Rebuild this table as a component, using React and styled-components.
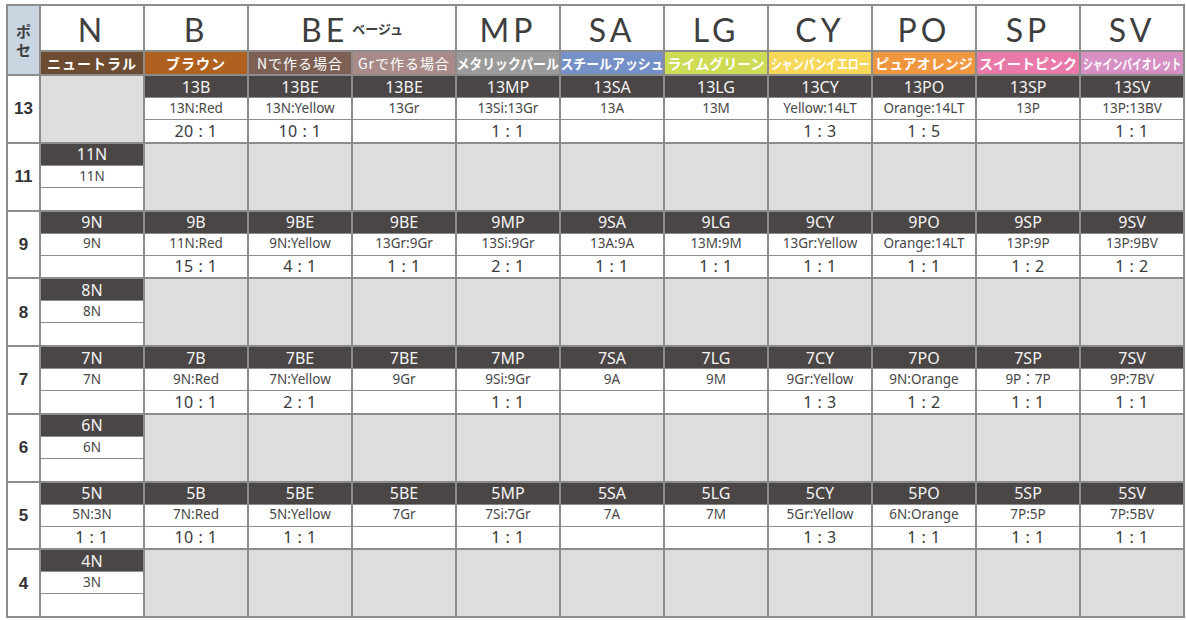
import React, { Fragment } from 'react';
import styled, { createGlobalStyle } from 'styled-components';

const GlobalStyle = createGlobalStyle`
  html, body {
    margin: 0;
    padding: 0;
    background: #ffffff;
  }
  body {
    font-family: "Noto Sans", "Noto Sans CJK JP", sans-serif;
  }
`;

const Page = styled.div`
  padding: 4px 0 0 6px;
`;

const Table = styled.table`
  width: 1178px;
  border-collapse: collapse;
  table-layout: fixed;
  border: 2px solid #8c8c8c;
  color: #3a3a3a;

  td, th {
    border: 2px solid #8c8c8c;
    padding: 0;
    text-align: center;
    vertical-align: middle;
    white-space: nowrap;
    overflow: hidden;
    line-height: 1;
  }
`;

const Corner = styled.th`
  background: #c9d5e1;
  color: #3f3f3f;
  font-family: "Noto Sans CJK JP", sans-serif;
  font-size: 15px;
  font-weight: 700;
  line-height: 19px !important;
`;

const Big = styled.th`
  height: 40px;
  font-family: Lato, sans-serif;
  font-size: 32px;
  font-weight: 400;
  letter-spacing: 4px;
  color: #3e3e3e;
  padding-top: 4px !important;
`;

const BigSub = styled.span`
  font-family: "Noto Sans CJK JP", sans-serif;
  font-size: 13px;
  font-weight: 700;
  letter-spacing: 0;
  margin-left: 4px;
  vertical-align: 8px;
`;

const Sub = styled.th`
  height: 22px;
  background: ${(p) => p.$bg};
  color: #ffffff;
  font-family: "Noto Sans CJK JP", sans-serif;
  font-size: 14px;
  font-weight: ${(p) => (p.$light ? 400 : 700)};
  letter-spacing: ${(p) => p.$ls || 0}px;
  border-bottom-width: 1px !important;
`;

const SubText = styled.span`
  display: inline-block;
  transform: scaleX(${(p) => p.$sx || 1});
  transform-origin: center;
  margin: 0 -20px;
`;

const RowLabel = styled.td`
  font-family: "Liberation Sans", sans-serif;
  font-size: 17px;
  font-weight: 700;
  color: #333333;
`;

const Empty = styled.td`
  background: #dedede;
`;

const Code = styled.td`
  height: 21px;
  background: #4a4645;
  color: #f4f4f4;
  font-size: 16px;
  border-bottom-width: 1px !important;
`;

const Mix = styled.td`
  height: 21px;
  font-size: 13.5px;
  color: #474747;
  border-top-width: 1px !important;
  border-bottom-width: 1px !important;
`;

const Ratio = styled.td`
  height: 21.75px;
  font-size: 16px;
  letter-spacing: 0.5px;
  color: #3a3a3a;
  border-top-width: 1px !important;
`;

const subs = [
  { t: 'ニュートラル', bg: '#6d4c31', ls: 1 },
  { t: 'ブラウン', bg: '#b0611f', ls: 1 },
  { t: 'Nで作る場合', bg: '#7d5f54', light: true, ls: 1 },
  { t: 'Grで作る場合', bg: '#a88a88', light: true, ls: 1 },
  { t: 'メタリックパール', bg: '#9b9b9b', sx: 0.92 },
  { t: 'スチールアッシュ', bg: '#7690c8', sx: 0.92 },
  { t: 'ライムグリーン', bg: '#cedc55', sx: 1 },
  { t: 'シャンパンイエロー', bg: '#f6d757', sx: 0.78 },
  { t: 'ピュアオレンジ', bg: '#f0963e', sx: 1 },
  { t: 'スイートピンク', bg: '#e979a8', sx: 1 },
  { t: 'シャインバイオレット', bg: '#d690c4', sx: 0.7 },
];

const rows = [
  {
    label: '13',
    cells: [
      null,
      ['13B', '13N:Red', '20 : 1'],
      ['13BE', '13N:Yellow', '10 : 1'],
      ['13BE', '13Gr', ''],
      ['13MP', '13Si:13Gr', '1 : 1'],
      ['13SA', '13A', ''],
      ['13LG', '13M', ''],
      ['13CY', 'Yellow:14LT', '1 : 3'],
      ['13PO', 'Orange:14LT', '1 : 5'],
      ['13SP', '13P', ''],
      ['13SV', '13P:13BV', '1 : 1'],
    ],
  },
  { label: '11', cells: [['11N', '11N', ''], null, null, null, null, null, null, null, null, null, null] },
  {
    label: '9',
    cells: [
      ['9N', '9N', ''],
      ['9B', '11N:Red', '15 : 1'],
      ['9BE', '9N:Yellow', '4 : 1'],
      ['9BE', '13Gr:9Gr', '1 : 1'],
      ['9MP', '13Si:9Gr', '2 : 1'],
      ['9SA', '13A:9A', '1 : 1'],
      ['9LG', '13M:9M', '1 : 1'],
      ['9CY', '13Gr:Yellow', '1 : 1'],
      ['9PO', 'Orange:14LT', '1 : 1'],
      ['9SP', '13P:9P', '1 : 2'],
      ['9SV', '13P:9BV', '1 : 2'],
    ],
  },
  { label: '8', cells: [['8N', '8N', ''], null, null, null, null, null, null, null, null, null, null] },
  {
    label: '7',
    cells: [
      ['7N', '7N', ''],
      ['7B', '9N:Red', '10 : 1'],
      ['7BE', '7N:Yellow', '2 : 1'],
      ['7BE', '9Gr', ''],
      ['7MP', '9Si:9Gr', '1 : 1'],
      ['7SA', '9A', ''],
      ['7LG', '9M', ''],
      ['7CY', '9Gr:Yellow', '1 : 3'],
      ['7PO', '9N:Orange', '1 : 2'],
      ['7SP', '9P：7P', '1 : 1'],
      ['7SV', '9P:7BV', '1 : 1'],
    ],
  },
  { label: '6', cells: [['6N', '6N', ''], null, null, null, null, null, null, null, null, null, null] },
  {
    label: '5',
    cells: [
      ['5N', '5N:3N', '1 : 1'],
      ['5B', '7N:Red', '10 : 1'],
      ['5BE', '5N:Yellow', '1 : 1'],
      ['5BE', '7Gr', ''],
      ['5MP', '7Si:7Gr', '1 : 1'],
      ['5SA', '7A', ''],
      ['5LG', '7M', ''],
      ['5CY', '5Gr:Yellow', '1 : 3'],
      ['5PO', '6N:Orange', '1 : 1'],
      ['5SP', '7P:5P', '1 : 1'],
      ['5SV', '7P:5BV', '1 : 1'],
    ],
  },
  { label: '4', cells: [['4N', '3N', ''], null, null, null, null, null, null, null, null, null, null] },
];

const App = () => {
  return (
    <Page>
      <GlobalStyle />
      <Table>
        <colgroup>
          <col style={{ width: 33 }} />
          {subs.map((s, i) => (
            <col key={i} style={{ width: 104 }} />
          ))}
        </colgroup>
        <thead>
          <tr>
            <Corner rowSpan={2}>ポ<br />セ</Corner>
            <Big>N</Big>
            <Big>B</Big>
            <Big colSpan={2}>BE<BigSub>ベージュ</BigSub></Big>
            <Big>MP</Big>
            <Big>SA</Big>
            <Big>LG</Big>
            <Big>CY</Big>
            <Big>PO</Big>
            <Big>SP</Big>
            <Big>SV</Big>
          </tr>
          <tr>
            {subs.map((s) => (
              <Sub key={s.t} $bg={s.bg} $light={s.light} $ls={s.ls}>
                <SubText $sx={s.sx}>{s.t}</SubText>
              </Sub>
            ))}
          </tr>
        </thead>
        <tbody>
          {rows.map((r) => (
            <Fragment key={r.label}>
              <tr>
                <RowLabel rowSpan={3}>{r.label}</RowLabel>
                {r.cells.map((c, i) =>
                  c ? <Code key={i}>{c[0]}</Code> : <Empty key={i} rowSpan={3} />
                )}
              </tr>
              <tr>
                {r.cells.map((c, i) => (c ? <Mix key={i}>{c[1]}</Mix> : null))}
              </tr>
              <tr>
                {r.cells.map((c, i) => (c ? <Ratio key={i}>{c[2]}</Ratio> : null))}
              </tr>
            </Fragment>
          ))}
        </tbody>
      </Table>
    </Page>
  );
};

export default App;
